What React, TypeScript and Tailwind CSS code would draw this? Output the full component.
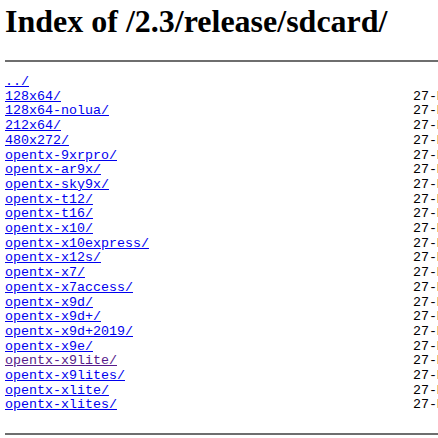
import React from "react";

interface Entry {
  name: string;
  date?: string;
  visited?: boolean;
}

const entries: Entry[] = [
  { name: "../" },
  { name: "128x64/", date: "27-Mar-2021 08:12" },
  { name: "128x64-nolua/", date: "27-Mar-2021 08:12" },
  { name: "212x64/", date: "27-Mar-2021 08:12" },
  { name: "480x272/", date: "27-Mar-2021 08:12" },
  { name: "opentx-9xrpro/", date: "27-Mar-2021 08:12" },
  { name: "opentx-ar9x/", date: "27-Mar-2021 08:12" },
  { name: "opentx-sky9x/", date: "27-Mar-2021 08:12" },
  { name: "opentx-t12/", date: "27-Mar-2021 08:12" },
  { name: "opentx-t16/", date: "27-Mar-2021 08:12" },
  { name: "opentx-x10/", date: "27-Mar-2021 08:12" },
  { name: "opentx-x10express/", date: "27-Mar-2021 08:12" },
  { name: "opentx-x12s/", date: "27-Mar-2021 08:12" },
  { name: "opentx-x7/", date: "27-Mar-2021 08:12" },
  { name: "opentx-x7access/", date: "27-Mar-2021 08:12" },
  { name: "opentx-x9d/", date: "27-Mar-2021 08:12" },
  { name: "opentx-x9d+/", date: "27-Mar-2021 08:12" },
  { name: "opentx-x9d+2019/", date: "27-Mar-2021 08:12" },
  { name: "opentx-x9e/", date: "27-Mar-2021 08:12" },
  { name: "opentx-x9lite/", date: "27-Mar-2021 08:12", visited: true },
  { name: "opentx-x9lites/", date: "27-Mar-2021 08:12" },
  { name: "opentx-xlite/", date: "27-Mar-2021 08:12" },
  { name: "opentx-xlites/", date: "27-Mar-2021 08:12" },
];

export default function App() {
  return (
    <div className="w-[438px] h-[438px] overflow-hidden bg-white pl-[5px]">
      <h1 className="mt-[3px] mb-[20px] text-[32px] leading-[37px] font-bold text-black font-['Liberation_Serif',serif] whitespace-nowrap">
        Index of /2.3/release/sdcard/
      </h1>
      <hr className="border-0 border-t-2 border-[#6e6e6e]" />
      {/* listing */}
      <pre className="mt-[13px] mb-[20px] text-[13.33px] leading-[14.7px] text-black font-['Liberation_Mono',monospace] whitespace-pre">
        {entries.map((e) => (
          <div key={e.name}>
            <a
              href="#"
              className={
                e.visited
                  ? "underline text-[#551a8b]"
                  : "underline text-[#0000ee]"
              }
            >
              {e.name}
            </a>
            {e.date ? " ".repeat(51 - e.name.length) + e.date + "                   -" : ""}
          </div>
        ))}
      </pre>
      <hr className="border-0 border-t-2 border-[#6e6e6e]" />
    </div>
  );
}
